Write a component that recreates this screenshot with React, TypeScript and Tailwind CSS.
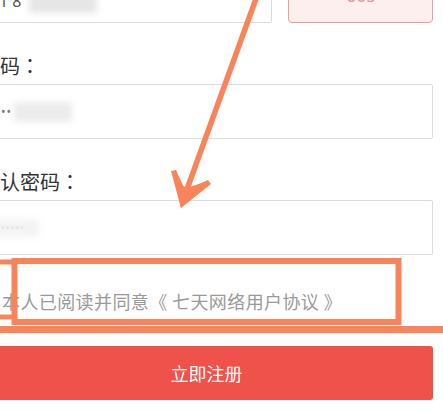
import React from "react";

const font = { fontFamily: '"Noto Sans CJK TC", "Noto Sans", sans-serif' };

function Annotations() {
  const c = "#f9845a";
  return (
    <svg className="pointer-events-none absolute left-0 top-0" width={443} height={413} viewBox="0 0 443 413">
      {/* small box at the left edge */}
      <rect x={-10} y={262} width={24.5} height={55} fill="none" stroke={c} strokeWidth={5} />
      {/* box round the agreement */}
      <rect x={14.5} y={261} width={384} height={61} fill="none" stroke={c} strokeWidth={6} />
      <line x1={0} y1={329.5} x2={443} y2={329.5} stroke={c} strokeWidth={7} />
      {/* arrow */}
      <line x1={257} y1={-4} x2={186} y2={192} stroke={c} strokeWidth={5.5} strokeLinecap="round" />
      <polygon points="181,208 171,171 176,170 185,190 208,180 211,184" fill={c} />
      <polygon points="181,208 174,178 186,188 206,182" fill={c} />
    </svg>
  );
}

export default function App() {
  return (
    <div className="relative h-[413px] w-[443px] overflow-hidden bg-white" style={font}>
      <div className="-ml-[20px] -mt-[32px] mr-[10px] flex flex-col">
        <div className="flex gap-[16px]">
          <div className="flex h-[55px] flex-1 items-center gap-[8px] rounded-[2px] border border-[#dcdcdc] bg-white pl-[18px]">
            <span className="pt-[10px] font-['Noto_Sans'] text-[16px] leading-[24px] text-[#555]">1 8</span>
            <div className="mt-[6px] h-[28px] w-[68px] bg-[#e6e6e6] blur-[3px]" />
          </div>
          <div className="flex h-[55px] w-[145px] items-center justify-center rounded-[4px] border border-[#e4a3a3] bg-[#fdefee] font-['Noto_Sans'] text-[18px] text-[#d99a9a]">
            60s
          </div>
        </div>

        <div className="mt-[29px] mb-[4px] text-[20px] leading-[28px] text-[#333]">密码：</div>
        <div className="flex h-[55px] items-center gap-[2px] rounded-[2px] border border-[#dcdcdc] bg-white pl-[20px]">
          <span className="font-['Noto_Sans'] text-[12px] leading-[20px] tracking-[1px] text-[#777]">••</span>
          <div className="h-[20px] w-[58px] bg-[#ececec] blur-[3px]" />
        </div>

        <div className="mt-[29px] mb-[4px] text-[20px] leading-[28px] text-[#333]">确认密码：</div>
        <div className="flex h-[55px] items-center rounded-[2px] border border-[#dcdcdc] bg-white pl-[20px]">
          <span className="font-['Noto_Sans'] text-[10px] leading-[20px] tracking-[1px] text-[#c4c4c4]">•••••</span>
          <div className="-ml-[36px] h-[18px] w-[50px] bg-[#efefef] opacity-70 blur-[3px]" />
        </div>

        <div className="pl-[22px] pt-[33px] pb-[32px] text-[18px] leading-[26px] tracking-[0.4px] text-[#9a9a9a]">
          本人已阅读并同意《 七天网络用户协议 》
        </div>

        <button className="flex h-[54px] w-full items-center justify-center rounded-[3px] bg-[#ee524b] text-[18px] text-white">
          立即注册
        </button>
      </div>
      <Annotations />
    </div>
  );
}
